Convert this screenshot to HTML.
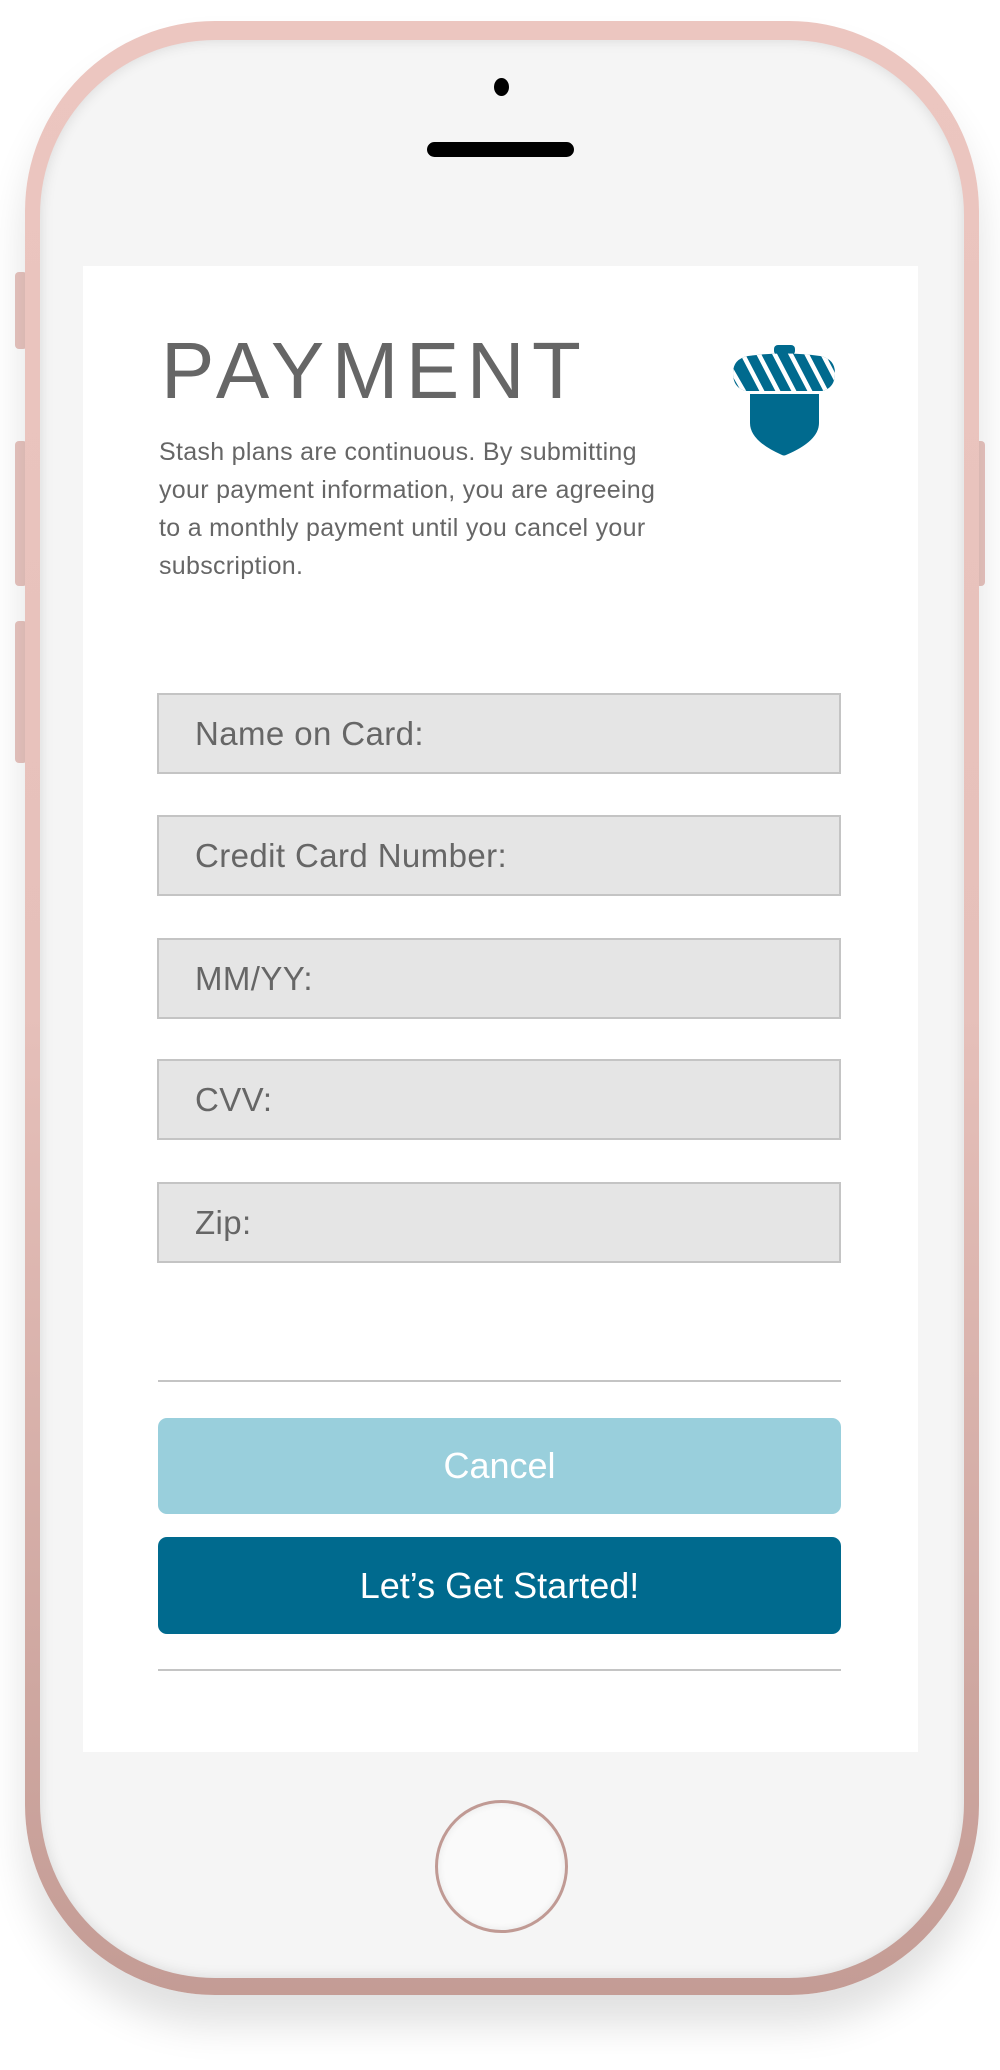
<!DOCTYPE html>
<html><head><meta charset="utf-8"><style>
*{margin:0;padding:0;box-sizing:border-box}
body{width:1000px;height:2070px;background:#fff;position:relative;overflow:hidden;font-family:"Liberation Sans",sans-serif}
.abs{position:absolute}
.phone{left:25px;top:21px;width:954px;height:1974px;border-radius:190px;background:linear-gradient(#ecc6c0,#e6c0ba 50%,#c49c95);box-shadow:0 30px 40px rgba(0,0,0,.12)}
.face{left:40px;top:40px;width:924px;height:1938px;border-radius:175px;background:#f5f5f5;box-shadow:inset 0 0 14px rgba(0,0,0,.12)}
.screen{left:83px;top:266px;width:835px;height:1486px;background:#fff}
.field{left:157px;width:684px;height:81px;background:#e5e5e5;border:2px solid #c4c4c4;color:#666;font-size:33px;letter-spacing:0.4px;padding-left:36px;line-height:77px}
.hr{left:158px;width:683px;height:2px;background:#c4c4c4}
.btn{left:158px;width:683px;border-radius:9px;color:#fff;text-align:center;font-size:36px}
.side{background:#e8c4bf;border-radius:4px;width:12px}
</style></head><body>
<div class="abs side" style="left:15px;top:272px;height:77px"></div>
<div class="abs side" style="left:15px;top:441px;height:145px"></div>
<div class="abs side" style="left:15px;top:621px;height:142px"></div>
<div class="abs side" style="left:973px;top:441px;height:145px"></div>
<div class="abs phone"></div>
<div class="abs face"></div>
<div class="abs" style="left:494px;top:78px;width:15px;height:18px;border-radius:50%;background:#000"></div>
<div class="abs" style="left:427px;top:142px;width:147px;height:15px;border-radius:8px;background:#000"></div>
<div class="abs screen"></div>
<div class="abs" style="left:161px;top:326px;font-size:80px;letter-spacing:7.5px;color:#666;line-height:90px">PAYMENT</div>
<div class="abs" style="left:159px;top:433px;white-space:nowrap;font-size:25px;line-height:38px;color:#666;letter-spacing:0.3px">Stash plans are continuous. By submitting<br>your payment information, you are agreeing<br>to a monthly payment until you cancel your<br>subscription.</div>
<svg class="abs" style="left:730px;top:343px" width="108" height="114" viewBox="0 0 108 114">
<defs><clipPath id="c"><path d="M3 30 Q3 16 18 13 Q54 8 90 13 Q105 16 105 30 Q105 45 92 48 L16 48 Q3 45 3 30Z"/></clipPath></defs>
<rect x="44" y="2" width="21" height="10" rx="4" fill="#006a8e"/>
<g clip-path="url(#c)">
<rect x="0" y="0" width="108" height="60" fill="#006a8e"/>
<path d="M-6 14 L16 52M10 6 L34 52M26 6 L50 52M42 6 L66 52M58 6 L82 52M74 6 L98 52M90 6 L114 52" stroke="#fff" stroke-width="4.5"/>
</g>
<path d="M20 51 L89 51 L89 80 Q89 98 56 112 Q54 113 52 112 Q20 98 20 80Z" fill="#006a8e"/>
</svg>
<div class="abs field" style="top:693px">Name on Card:</div>
<div class="abs field" style="top:815px">Credit Card Number:</div>
<div class="abs field" style="top:938px">MM/YY:</div>
<div class="abs field" style="top:1059px">CVV:</div>
<div class="abs field" style="top:1182px">Zip:</div>
<div class="abs hr" style="top:1380px"></div>
<div class="abs btn" style="top:1418px;height:96px;line-height:96px;background:#99cfdc">Cancel</div>
<div class="abs btn" style="top:1537px;height:97px;line-height:97px;background:#006a8e">Let’s Get Started!</div>
<div class="abs hr" style="top:1669px"></div>
<div class="abs" style="left:435px;top:1800px;width:133px;height:133px;border-radius:50%;border:3px solid #c09a94;background:#fafafa;box-shadow:inset 0 0 8px rgba(0,0,0,.08)"></div>
</body></html>
